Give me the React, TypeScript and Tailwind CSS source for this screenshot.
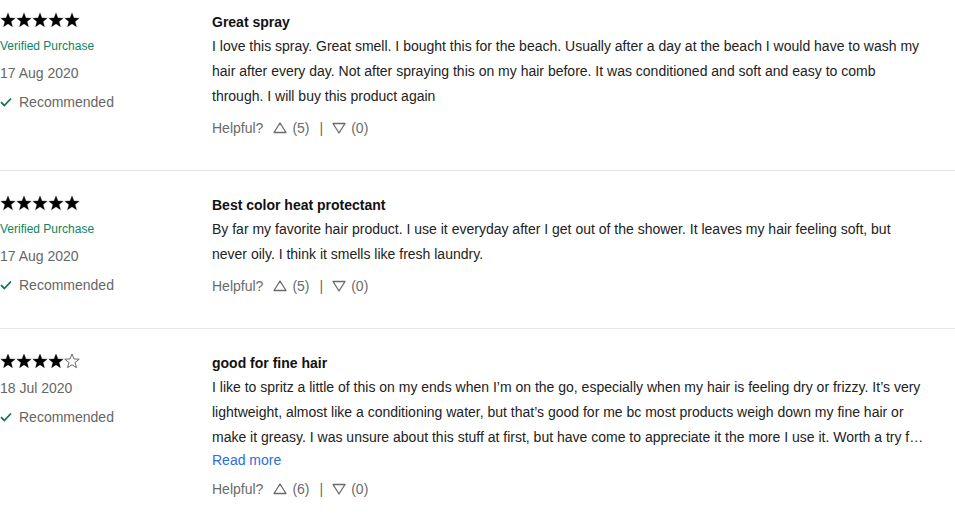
import React from 'react'

type Review = {
  rating: number
  verified: boolean
  date: string
  title: string
  body: string
  clamp: boolean
  up: number
  down: number
}

const reviews: Review[] = [
  {
    rating: 5,
    verified: true,
    date: '17 Aug 2020',
    title: 'Great spray',
    body: 'I love this spray. Great smell. I bought this for the beach. Usually after a day at the beach I would have to wash my hair after every day. Not after spraying this on my hair before. It was conditioned and soft and easy to comb through. I will buy this product again',
    clamp: false,
    up: 5,
    down: 0,
  },
  {
    rating: 5,
    verified: true,
    date: '17 Aug 2020',
    title: 'Best color heat protectant',
    body: 'By far my favorite hair product. I use it everyday after I get out of the shower. It leaves my hair feeling soft, but never oily. I think it smells like fresh laundry.',
    clamp: false,
    up: 5,
    down: 0,
  },
  {
    rating: 4,
    verified: false,
    date: '18 Jul 2020',
    title: 'good for fine hair',
    body: 'I like to spritz a little of this on my ends when I\u2019m on the go, especially when my hair is feeling dry or frizzy. It\u2019s very lightweight, almost like a conditioning water, but that\u2019s good for me bc most products weigh down my fine hair or make it greasy. I was unsure about this stuff at first, but have come to appreciate it the more I use it. Worth a try for anyone with fine hair who wants a little moisture without the weight.',
    clamp: true,
    up: 6,
    down: 0,
  },
]

function Star({ filled }: { filled: boolean }) {
  return (
    <svg width="16" height="16" viewBox="0 0 24 24" className="block">
      <polygon
        points="12,1.5 14.9,8.9 22.8,9.3 16.6,14.3 18.7,22 12,17.6 5.3,22 7.4,14.3 1.2,9.3 9.1,8.9"
        fill={filled ? '#000' : 'none'}
        stroke={filled ? '#000' : '#444'}
        strokeWidth={filled ? 0.5 : 1.2}
        strokeLinejoin="round"
      />
    </svg>
  )
}

function Triangle({ down }: { down?: boolean }) {
  return (
    <svg width="14" height="12" viewBox="0 0 14 12" className="block">
      <polygon
        points={down ? '1,1.5 13,1.5 7,11' : '7,1 13,10.5 1,10.5'}
        fill="none"
        stroke="#6b6b6b"
        strokeWidth="1.3"
        strokeLinejoin="round"
      />
    </svg>
  )
}

function Check() {
  return (
    <svg width="12" height="10" viewBox="0 0 12 10" className="block">
      <path d="M1 5.2 L4.3 8.5 L11 1.5" fill="none" stroke="#0b7a4b" strokeWidth="1.8" />
    </svg>
  )
}

function ReviewRow({ r, last }: { r: Review; last: boolean }) {
  return (
    <div className={`flex pt-[23px] pb-8 ${last ? '' : 'border-b border-[#e6e6e6]'}`}>
      <div className="w-[212px] shrink-0 pt-px">
        <div className="flex h-4">
          {[1, 2, 3, 4, 5].map((i) => (
            <Star key={i} filled={i <= r.rating} />
          ))}
        </div>
        {r.verified && (
          <div className="mt-[10px] text-xs leading-4 text-[#0b8563]">Verified Purchase</div>
        )}
        <div className="mt-[9px] text-sm leading-5 text-[#666]">{r.date}</div>
        <div className="mt-[9px] flex items-center gap-[7px] text-sm leading-5 text-[#666]">
          <Check />
          <span>Recommended</span>
        </div>
      </div>
      <div className="w-[712px]">
        <div className="text-sm font-bold leading-[23px] text-[#111]">{r.title}</div>
        <p className={`text-sm leading-[25px] text-[#222] ${r.clamp ? 'line-clamp-3' : ''}`}>{r.body}</p>
        {r.clamp && <div className="text-sm leading-5 text-[#2a6fdb]">Read more</div>}
        <div className="mt-[9px] flex items-center text-sm leading-5 text-[#6b6b6b]">
          <span>Helpful?</span>
          <span className="ml-[10px]"><Triangle /></span>
          <span className="ml-[5px]">({r.up})</span>
          <span className="ml-[10px]">|</span>
          <span className="ml-[9px]"><Triangle down /></span>
          <span className="ml-[5px]">({r.down})</span>
        </div>
      </div>
    </div>
  )
}

export default function App() {
  return (
    <div className="h-[528px] w-[955px] overflow-hidden bg-white font-['Liberation_Sans',Arial,sans-serif]">
      <div className="-mt-[12px]">
        {reviews.map((r, i) => (
          <ReviewRow key={i} r={r} last={i === reviews.length - 1} />
        ))}
      </div>
    </div>
  )
}
